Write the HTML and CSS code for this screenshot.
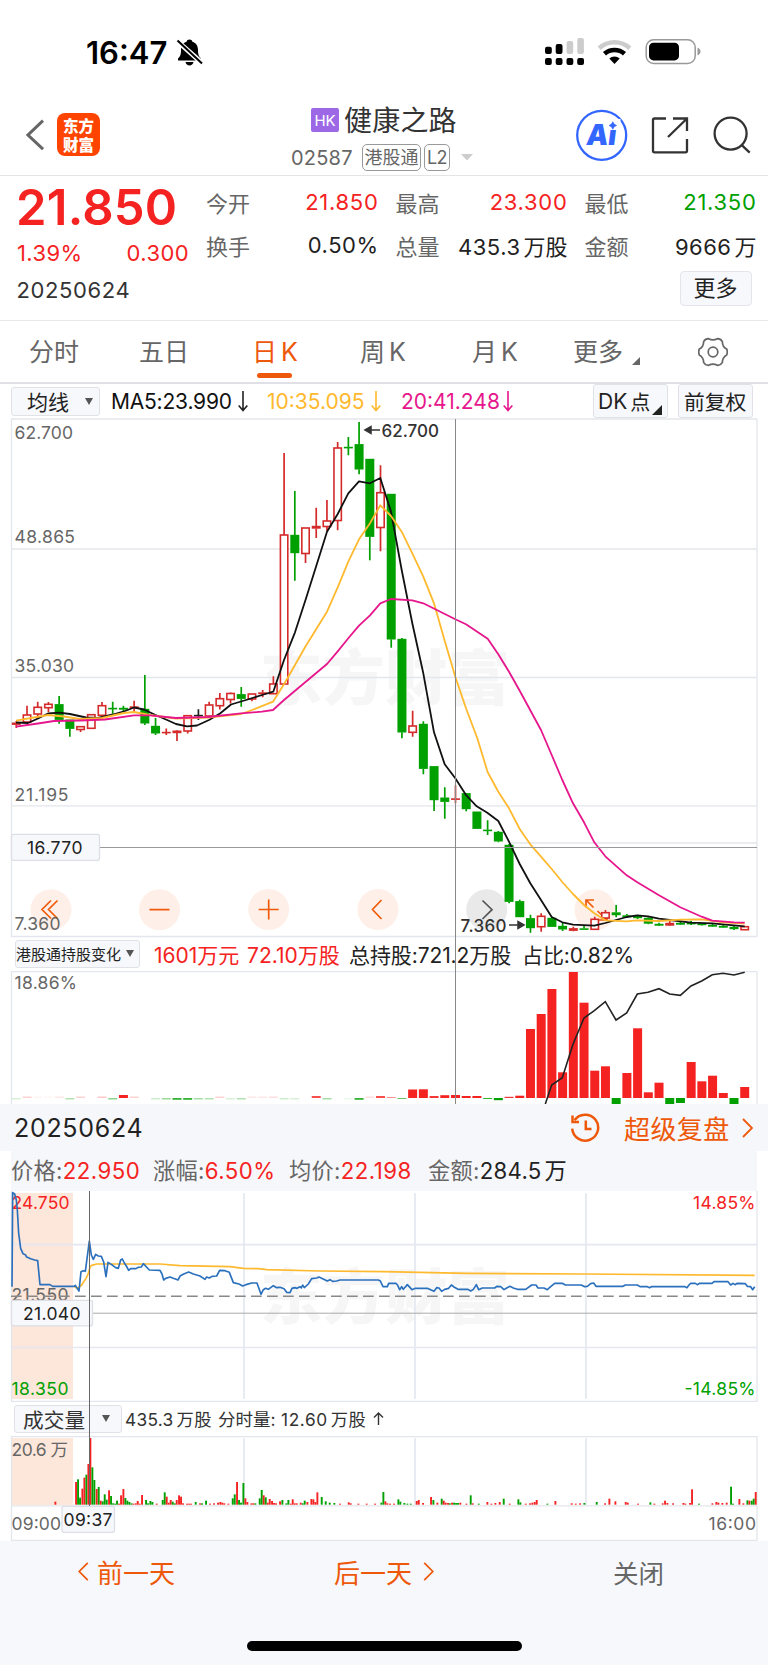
FILE: index.html
```html
<!DOCTYPE html>
<html lang="zh-CN">
<head>
<meta charset="utf-8">
<title>健康之路 02587</title>
<link rel="stylesheet" href="styles.css">
</head>
<body>
<header class="status">
  <span class="clock">16:47</span>
  <svg class="bell" width="27" height="30" viewBox="0 0 27 30"><path d="M13.5 1.5c1.6 0 2.6.8 2.9 2.2 3.800 1.200 5.600 4.300 5.600 8.300 0 5 1 6.500 3 8.500v2H2v-2c2-2 3-3.500 3-8.500 0-4 1.800-7.100 5.600-8.300.3-1.400 1.300-2.200 2.900-2.200zM9.500 24h8c-.4 2.300-2 3.500-4 3.500s-3.600-1.200-4-3.500z"/><path d="M0 2l26.500 23.500" stroke="#fff" stroke-width="5"/><path d="M1.500 2.500L26 25.500" stroke="#000" stroke-width="2"/></svg>
  <svg class="signals" width="160" height="30" viewBox="544 37 160 30">
    <g><rect x="545" y="46.700" width="6.800" height="7.400" rx="2"/><rect x="555.700" y="44" width="6.800" height="10" rx="2"/><rect x="566.600" y="41" width="6.600" height="13" rx="2" fill="#ccc"/><rect x="577.300" y="38" width="6.600" height="16" rx="2" fill="#ccc"/><rect x="545" y="58" width="6.800" height="7" rx="2"/><rect x="555.700" y="58" width="6.800" height="7" rx="2"/><rect x="566.500" y="58" width="6.800" height="7" rx="2"/><rect x="577.200" y="58" width="6.800" height="7" rx="2"/></g>
    <g fill="none" stroke-width="4.600"><path d="M599.200 48.200a22.500 22.500 0 0 1 30.600 0" stroke="#ccc"/><path d="M604.500 53.800a15 15 0 0 1 20 0" stroke="#000"/></g><path d="M609.300 58.600a7.600 7.600 0 0 1 10.400 0l-5.200 5.300z"/>
    <rect x="646.200" y="39.800" width="49" height="23.600" rx="7.500" fill="none" stroke="#999" stroke-width="1.500"/><rect x="649" y="42.800" width="30" height="17.600" rx="4.500"/><path d="M697.500 47.500c4 1.500 4 6.500 0 8z" fill="#999"/>
  </svg>
</header>

<nav class="nav">
  <svg class="back" width="18" height="32" viewBox="0 0 18 32"><path d="M17 1.700L2 16l15 14.200" fill="none" stroke="#666" stroke-width="3"/></svg>
  <div class="logo"><span>东方</span><span>财富</span></div>
  <div class="stock">
    <div class="stock-name"><i class="hk">HK</i><b>健康之路</b></div>
    <div class="stock-code"><span class="code">02587</span><span class="tag tag-cn">港股通</span><span class="tag">L2</span><svg width="12" height="7" viewBox="0 0 12 7"><path d="M0 0h12L6 6.500z" fill="#ccc"/></svg></div>
  </div>
  <svg class="nav-icons" width="180" height="56" viewBox="574 108 180 56">
    <circle cx="601.700" cy="135.300" r="24.500" fill="#fff" stroke="#36f" stroke-width="2.300"/>
    <text class="ai" transform="translate(585.500 145.300) skewX(-7)" x="0" y="0" textLength="30" lengthAdjust="spacingAndGlyphs">Ai</text><path d="M606.500 119h14v11h-14z" fill="#fff"/><path d="M612.800 121.800q.8 2.900 3.700 3.700-2.900.8-3.700 3.700-.8-2.900-3.700-3.700 2.900-.8 3.700-3.700z" fill="#36f" stroke="#36f" stroke-width=".7"/>
    <g fill="none" stroke="#333" stroke-width="2.300"><path d="M666 118.500h-11.500q-1.500 0-1.500 1.500v30.800q0 1.500 1.500 1.500h31q1.500 0 1.500-1.500V139"/><path d="M673 118.500h14V131M668 137l18.500-18"/><circle cx="730.600" cy="133.600" r="16"/><path d="M741.500 144.800l8.200 7.800"/></g>
  </svg>
</nav>

<section class="quote">
  <div class="price">
    <div class="last">21.850</div>
    <div class="change"><span>1.39%</span><span>0.300</span></div>
    <div class="date">20250624</div>
  </div>
  <dl class="stats">
    <dt>今开</dt><dd class="up">21.850</dd><dt>最高</dt><dd class="up">23.300</dd><dt>最低</dt><dd class="down">21.350</dd>
    <dt>换手</dt><dd>0.50%</dd><dt>总量</dt><dd>435.3<em>万股</em></dd><dt>金额</dt><dd>9666<em>万</em></dd>
    <dd class="more-cell"><button class="more">更多</button></dd>
  </dl>
</section>

<nav class="tabs">
  <a>分时</a><a>五日</a><a class="on">日<u>K</u></a><a>周<u>K</u></a><a>月<u>K</u></a>
  <a class="tab-more">更多<svg width="8" height="8" viewBox="0 0 8 8"><path d="M8 0v8H0z" fill="#666"/></svg></a>
  <svg class="gear" width="30" height="30" viewBox="-15 -15 30 30" fill="none" stroke="#666" stroke-width="1.700"><path d="M13.690 2.910Q9.350 5.400 9.370 10.400 7.400 13.500 4.330 13.310 0 10.800-4.330 13.310-7.400 13.500-9.370 10.400-9.350 5.400-13.690 2.910-14.900 0-13.690-2.910-9.350-5.400-9.370-10.400-7.400-13.500-4.330-13.310 0-10.800 4.330-13.310 7.400-13.500 9.370-10.400 9.350-5.400 13.690-2.910 14.900 0 13.690 2.910z"/><circle r="4.800"/></svg>
</nav>

<main class="kline">
  <div class="ma-row">
    <button class="pill ma-pill">均线<i class="caret"></i></button>
    <span class="ma ma5">MA5:23.990</span><svg class="arr" width="10" height="21" viewBox="0 0 10 21"><path d="M5 0v19.500M.7 14.500L5 19.500l4.300-5" stroke="#222"/></svg>
    <span class="ma ma10">10:35.095</span><svg class="arr" width="10" height="21" viewBox="0 0 10 21"><path d="M5 0v19.500M.7 14.500L5 19.500l4.300-5" stroke="#ffb92e"/></svg>
    <span class="ma ma20">20:41.248</span><svg class="arr" width="10" height="21" viewBox="0 0 10 21"><path d="M5 0v19.500M.7 14.500L5 19.500l4.300-5" stroke="#e6168c"/></svg>
    <button class="pill dk">DK<em>点</em><svg width="10" height="10" viewBox="0 0 10 10"><path d="M10 0v10H0z" fill="#222"/></svg></button>
    <button class="pill fq">前复权</button>
  </div>
  <svg id="candles" width="768" height="520" viewBox="0 418 768 520">
    <text class="wm" x="260" y="699.500" textLength="250" lengthAdjust="spacingAndGlyphs">东方财富</text>
    <g class="grid"><path d="M11.500 419v518M757 419v518M11 419h746M11 549h746M11 677.500h746M11 805.800h746M511 843h246M11 936.500h746"/></g>
    <g fill="#fef0e8"><circle cx="51" cy="909.700" r="20.500"/><circle cx="159.500" cy="909.700" r="20.500"/><circle cx="268.700" cy="909.500" r="20.500"/><circle cx="378" cy="909.500" r="20.500"/><circle cx="486.700" cy="909.700" r="20.500" fill="#e9e9e9"/><circle cx="595" cy="909.700" r="20.500"/></g>
    <g fill="none" stroke="#f05a0a" stroke-width="1.700"><path d="M51 900.500l-9 9 9 9M57.500 900.500l-9 9 9 9M149.500 909.700h20M258.700 909.500h20M268.700 899.500v20M381.500 900l-9 9.500 9 9.500M586 907.500v-7.500h8M586 900l7.500 7.500M597.500 911l9.500 9M607 912.500v7.500h-8"/><path d="M482.500 900.500l9.500 9.200-9.500 9.300" stroke="#555"/></g>
    <g class="axis"><text x="14.500" y="438.500" textLength="58.500">62.700</text><text x="14.500" y="542.500" textLength="60.500">48.865</text><text x="14.500" y="671.500" textLength="59.500">35.030</text><text x="14.500" y="800.500" textLength="54">21.195</text><text x="14.500" y="930" textLength="46">7.360</text></g>
    <g id="candle-layer"></g>
    <g fill="none" stroke-width="1.800" stroke-linejoin="round">
      <path stroke="#111" d="M16 722.500L28 723 38 718.500 48 713.500 59 712.700 70 714 86 717.500 98 718 113 714.500 125 711 134 707.500 144 709.500 155 714.700 166 719.500 176 724 187 726.300 197 725.500 209 720 220 713.500 231 704.500 246 700 262 695 273.300 691.700 284 660 295 632.300 305.500 600 316 566.700 327 531.700 337.700 514 348.300 493.300 359 481.300 370 483.300 380.300 478 391 511.700 401.700 570 412.300 623.300 423.300 673.300 434 732.300 444.700 764.300 455.300 778.300 466 795 476.700 806.300 487.300 812.700 498.300 821 509 841.700 519.700 864 530.300 883.300 541 900 551.700 917 562.300 922.300 573 924.700 594.300 925.700 605.300 923 616 920 626.700 917 637.300 915.300 648 916.300 659 918.700 669.700 920 691 922.700 712.300 923.300 723 924.300 744.700 926.300"/>
      <path stroke="#ffb92e" d="M16 720.700L48 715 64 716.500 80 719 102 718 124 713 134 712 150 715 176 718.500 208 717.500 241 714 252 710 273 701.700 284 684.300 295 665 305.300 646.700 327 611.700 337.700 587.300 348.300 561.700 359 539.300 370 523.300 380.300 505.300 391 516 401.700 531.700 412.300 553.300 423.300 576.700 434 603.300 444.700 640.700 455.300 676.700 466 708.300 477.300 738.300 487.700 772.300 498.300 791.700 509 808.300 519.700 829 530.300 844.300 541 856.700 551.700 869 562.300 882 573 894 584 905 594.300 913.300 605.300 920.300 626.700 921.300 637 920.300 659 921 680.300 919.700 701.700 919.300 723 922.300 744.700 923.500"/>
      <path stroke="#e6168c" d="M16 726.700L38 723.500 54 721 80 720.500 105 719.500 134 715.300 150 715.300 176 718 208 717 241 713.300 262 711.700 273 710 284 700 327 664 337.700 651.300 348.300 638.300 359 625.700 370 615.300 380.300 603.300 391 599 412.300 600.300 423.300 603.300 455.300 619.300 466 624.300 487.700 638.700 498.300 654.300 509 671.700 519.700 690.700 541 730 551.700 755 562.300 780 573 803.300 584 822.300 594.300 842.300 605.300 856.300 626.700 875.300 637.300 882.300 659 895.300 680.300 907.300 701.700 916.700 712.300 920.700 734 922.300 744.700 922.700"/>
    </g>
    <g class="mark"><text x="381.500" y="436.500" textLength="57.500">62.700</text><text x="460.500" y="931.500" textLength="46">7.360</text><path d="M368 430h12M509 925h12"/><path d="M365 430l6-3.500v7zM524 925l-6-3.500v7z" fill="#333" stroke="none"/></g>
    <path d="M11 847.500h746" stroke="#999"/>
    <g class="tip"><rect x="11.500" y="834.300" width="88" height="26" rx="2"/><text x="27" y="854" textLength="55.500">16.770</text></g>
  </svg>
  <div class="hold-row">
    <button class="pill hold-pill">港股通持股变化<i class="caret"></i></button>
    <span class="h1 up">1601万元</span><span class="h2 up">72.10万股</span><span class="h3">总持股:721.2万股</span><span class="h4">占比:0.82%</span>
  </div>
  <svg id="holding" width="768" height="133" viewBox="0 971 768 133">
    <path class="grid" d="M11.500 971.500v133M757 971.500v133M11 971.500h746"/>
    <g class="axis"><text x="14.500" y="989" textLength="62.500">18.86%</text></g>
    <g id="holding-layer"></g>
    <path fill="none" stroke="#222" stroke-width="1.600" d="M545.300 1104L551.700 1085 562.300 1077.700 573 1044.300 584 1018 594.300 1010.700 605.300 1001.700 616 1020 626.700 1013 637.300 994 648 992.300 659 988.700 669.700 994 680.300 995.300 691 986 701.700 981 712.300 974.700 723 973.300 734 975 744.700 972.300"/>
  </svg>
  <div class="crosshair cross-day"></div>
</main>

<section class="replay">
  <div class="replay-head">
    <span class="replay-date">20250624</span>
    <svg class="history" width="30" height="30" viewBox="570.500 1112 30 30" fill="none" stroke="#ee580a" stroke-width="2.500"><path d="M575 1119.200a13 13 0 1 1-2.300 8.500"/><path d="M573 1114.500v6.500h6.500M586.300 1119.500v8.500h5.700"/></svg>
    <span class="super">超级复盘</span>
    <svg class="chev" width="11" height="20" viewBox="0 0 11 20"><path d="M1 1l9 9-9 9"/></svg>
  </div>
  <div class="info"><span class="i1">价格:<b>22.950</b></span><span class="i2">涨幅:<b>6.50%</b></span><span class="i3">均价:<b>22.198</b></span><span class="i4">金额:<b class="dark">284.5<em>万</em></b></span></div>
  <svg width="768" height="211" viewBox="0 1191 768 211">
    <text class="wm" x="260" y="1318.500" textLength="250" lengthAdjust="spacingAndGlyphs">东方财富</text>
    <rect x="12" y="1193" width="61" height="206" fill="#fde6da"/>
    <path class="grid2" d="M12 1244.700h745M12 1347.500h745M244 1193v206M415 1193v206M586 1193v206"/>
    <path class="grid" d="M11.500 1191v210.500H757V1191"/>
    <path d="M11 1313.200h746" stroke="#aaa"/>
    <g class="axis"><text class="r" x="11.500" y="1208.500" textLength="58">24.750</text><text x="11.500" y="1301" textLength="57">21.550</text><text class="g" x="11.500" y="1394.500" textLength="57">18.350</text><text class="r" x="693" y="1208.500" textLength="62.500">14.85%</text><text class="g" x="684.500" y="1394.500" textLength="71">-14.85%</text></g>
    <path d="M11 1296.200h746" stroke="#888" stroke-width="1.500" stroke-dasharray="10.700 5.300"/>
    <g transform="translate(0 1180) scale(.33333)" fill="none" stroke-width="5" stroke-linejoin="round">
      <path stroke="#ffb92e" d="M222 319L232 326 245 315 258 295 265 280 270 262 275 256 290 252 480 252 540 257 690 260 730 265 775 266 800 269 960 273 1152 275 1402 280 1752 282 2264 286"/>
      <path stroke="#2b70bd" d="M36 320L38 38 44 42 49 60 52 90 56 160 62 205 69 221 76 224 80 231 92 236 104 240 113 242 120 314 150 314 158 319 222 319 226 316 237 333 243 275 250 272 256 274 268 183 274 225 280 238 287 223 295 228 304 229 311 246 318 290 324 247 335 254 347 263 355 265 362 240 367 237 373 249 379 258 386 271 392 266 408 266 414 262 424 261 430 251 448 270 480 271 486 282 491 300 497 295 510 291 520 295 534 300 541 287 553 281 566 276 580 282 600 288 615 298 620 291 628 294 636 289 650 288 659 271 675 272 688 277 700 308 717 312 728 318 738 314 755 309 771 309 783 343 790 329 797 325 805 328 820 317 830 323 840 322 852 326 860 337 870 338 876 325 884 323 891 325 900 320 904 324 908 315 913 323 925 312 935 296 950 294 957 291 968 296 982 303 990 299 998 304 1010 303 1020 300 1135 300 1141 303 1149 320 1162 320 1166 310 1188 310 1193 316 1199 329 1205 320 1210 328 1222 314 1236 329 1246 325 1282 325 1302 334 1310 323 1317 324 1325 334 1334 328 1346 325 1354 315 1362 321 1374 328 1404 328 1412 333 1420 328 1429 314 1436 329 1447 324 1484 324 1490 319 1502 320 1512 329 1520 324 1530 319 1540 324 1552 328 1577 328 1595 315 1608 315 1614 324 1632 324 1642 329 1652 320 1664 310 1687 310 1696 315 1744 315 1754 320 1762 319 1772 311 1781 309 1788 319 1869 319 1876 315 1912 315 1920 320 1942 320 1949 323 1954 320 2055 320 2061 323 2067 315 2072 310 2086 310 2092 314 2099 310 2136 310 2142 305 2184 305 2192 315 2199 310 2205 314 2212 310 2236 311 2242 319 2252 320 2258 329 2264 320"/>
    </g>
    <g class="tip"><rect x="11.500" y="1300.300" width="81" height="25.500" rx="2"/><text x="23" y="1319.700" textLength="57.500">21.040</text></g>
  </svg>
  <div class="vol-row"><button class="pill vol-pill">成交量<i class="caret"></i></button><span class="v1">435.3<em>万股</em></span><span class="v2">分时量:</span><span class="v3">12.60<em>万股</em></span><svg width="11" height="13" viewBox="0 0 11 13"><path d="M5.500 13V1M1 5.500L5.500 1 10 5.500" fill="none" stroke="#333" stroke-width="1.400"/></svg></div>
  <svg id="volume" width="768" height="105" viewBox="0 1436 768 105">
    <rect x="12" y="1438" width="61" height="67" fill="#fde6da"/>
    <path class="grid2" d="M244 1438v67M415 1438v67M586 1438v67"/>
    <path class="grid" d="M11.500 1436v105M757 1436v105M11 1436.500h746M11 1505.800h746M11 1540.500h746"/>
    <g class="axis"><text x="11.500" y="1455.500" textLength="56.500">20.6 万</text><text x="11.500" y="1529.500" textLength="49.500">09:00</text><text x="708.500" y="1529.500" textLength="47.500">16:00</text></g>
    <g id="volume-layer"></g>
    <g class="tip"><rect x="62" y="1506.300" width="52.500" height="26" rx="2"/><text x="63.500" y="1525.500" textLength="49">09:37</text></g>
  </svg>
  <div class="crosshair cross-minute"></div>
</section>

<footer class="footer">
  <div class="foot-row">
    <a class="prev"><svg class="chev" width="11" height="19" viewBox="0 0 11 20"><path d="M10 1l-9 9 9 9"/></svg>前一天</a>
    <a class="next">后一天<svg class="chev" width="11" height="19" viewBox="0 0 11 20"><path d="M1 1l9 9-9 9"/></svg></a>
    <a class="close">关闭</a>
  </div>
  <div class="home"></div>
</footer>
<script src="charts.js"></script>
</body>
</html>
```

FILE: styles.css
```css
* { box-sizing: border-box; }
body { margin: 0; width: 768px; background: #fff; color: #222; font-family: Inter, "Noto Sans CJK SC", sans-serif; font-weight: 400; white-space: nowrap; }
svg { display: block; flex: none; }
b, i, em, u { font-style: normal; font-weight: inherit; text-decoration: none; }
button { font: inherit; color: inherit; padding: 0; margin: 0; white-space: nowrap; }
.up { color: #f52222; }
.down { color: #00a000; }

.status { height: 90px; display: flex; align-items: flex-start; padding-left: 86px; }
.clock { width: 90px; padding-top: 34px; font-size: 31px; line-height: 38px; font-weight: 600; color: #000; }
.bell { margin-top: 38px; }
.signals { margin: 37px 0 0 341px; }

.nav { height: 86px; display: flex; border-bottom: 1px solid #e4e4e4; padding-left: 26px; }
.back { margin-top: 29px; }
.logo { width: 43px; height: 43px; margin: 23px 0 0 13px; border-radius: 8px; background: #ff4400; color: #fff; font: 900 15.500px/19px "Noto Sans CJK SC"; display: flex; flex-direction: column; align-items: center; padding-top: 3px; }
.stock { width: 192px; margin-left: 189px; }
.stock-name { display: flex; align-items: center; height: 34px; margin-top: 12px; padding-left: 22px; font-size: 28px; color: #333; letter-spacing: 0.200px; }
.hk { width: 28px; height: 24px; margin: 2px 5px 0 0; background: #9c68e6; border-radius: 2px; color: #fff; font-size: 15px; line-height: 25px; text-align: center; letter-spacing: 0; }
.stock-code { display: flex; align-items: center; height: 27px; margin-top: 8px; font-size: 20px; color: #666; }
.code { width: 73px; padding-left: 2px; letter-spacing: 0.200px; }
.tag { width: 26px; height: 27px; line-height: 25px; margin-right: 3px; border: 1.500px solid #999; border-radius: 5px; font-size: 18px; text-align: center; letter-spacing: -0.500px; }
.tag-cn { width: 59px; letter-spacing: 0; }
.stock-code svg { margin-left: 8px; }
.nav-icons { margin: 18px 0 0 93px; }
.ai { font: 900 29px Inter; fill: #36f; }

.quote { height: 145px; display: flex; border-bottom: 1px solid #e8e8e8; }
.price { width: 206px; padding-left: 16px; }
.last { font-size: 49px; font-weight: 600; line-height: 60px; height: 60px; color: #f52222; padding-top: 2px; letter-spacing: 0.200px; }
.change { display: flex; justify-content: space-between; width: 173px; padding-left: 1px; font-size: 22px; line-height: 30px; padding-top: 2px; color: #f52222; letter-spacing: 0.400px; }
.date { margin-top: 7px; font-size: 22px; line-height: 30px; color: #333; letter-spacing: 0.600px; padding-left: 0.500px; }
.stats { margin: 4px 0 0; display: grid; grid-template-columns: 44px 128.500px 61px 128px 61px 128px; grid-template-rows: 43px 43px 44px; align-items: center; font-size: 22px; color: #222; }
.stats dt { color: #666; }
.stats dt:nth-of-type(3n+2), .stats dt:nth-of-type(3n+3) { padding-left: 17px; }
.stats dd { margin: 0; text-align: right; letter-spacing: 0.500px; }
.stats dd.up { color: #f52222; letter-spacing: 0.700px; }
.stats dd.down { color: #00a000; letter-spacing: 0.700px; }
.stats em { margin-left: 3px; letter-spacing: 0; }
.stats .more-cell { grid-column: 1 / -1; display: flex; justify-content: flex-end; letter-spacing: 0; }
.more { width: 72px; height: 35px; margin: 1px 5px 0 0; line-height: 31px; border: 1.500px solid #e3e5ea; border-radius: 4px; background: #f6f8fb; font-size: 22px; }

.tabs { height: 63px; border-bottom: 2px solid #dfe1e7; display: flex; align-items: flex-start; padding-left: 29px; color: #666; font-size: 25px; line-height: 62px; }
.tabs a { width: 110px; }
.tabs a:nth-child(2) { width: 113px; }
.tabs u { margin-left: 4px; }
.tabs a:nth-child(3) { width: 108px; }
.tabs a:nth-child(4) { width: 112px; }
.tabs a:nth-child(5) { width: 101px; }
.tabs .on { color: #ee580a; position: relative; }
.on::after { content: ""; position: absolute; left: 4.500px; top: 52px; width: 35.500px; height: 5px; border-radius: 2.500px; background: #ee580a; }
.tabs .tab-more { width: 125px; display: flex; }
.tab-more svg { margin: 36px 0 0 9px; }
.gear { margin-top: 16px; }

.kline, .replay { position: relative; }
.pill { border: 1px solid #e0e2e7; border-radius: 3px; background: #f6f8fb; display: flex; align-items: center; flex: none; }
.caret { border: 4.500px solid transparent; border-top: 7px solid #555; border-bottom: 0; }
.ma-row { height: 34px; display: flex; align-items: center; padding-left: 11px; font-size: 21px; }
.ma-pill { width: 89px; height: 29px; padding-left: 15px; gap: 16px; font-size: 21px; }
.ma { padding-left: 11px; width: 138px; letter-spacing: -0.200px; color: #111; }
.ma10 { color: #ffb92e; width: 123px; padding-left: 19px; }
.ma20 { color: #e6168c; width: 122px; padding-left: 20px; }
.arr { fill: none; stroke-width: 1.600px; }
.arr + .ma { letter-spacing: 0; }
.dk { width: 75px; height: 34px; margin-left: 80px; padding-left: 4px; font-size: 21px; }
.dk em { margin-left: 3px; font-size: 20px; }
.dk svg { margin: 17px 0 0 2px; }
.fq { width: 75px; height: 34px; margin-left: 10px; padding-left: 5px; font-size: 20.800px; }

.grid { fill: none; stroke: #e3e6ec; stroke-width: 1.300px; }
.grid2 { fill: none; stroke: #e6e8f1; stroke-width: 1.700px; }
.wm { font: 900 60px "Noto Sans CJK SC"; fill: #f6f6f6; }
.axis { font-size: 17.500px; fill: #666; }
.axis .r { fill: #f52222; }
.axis .g { fill: #00a000; }
.mark { font-size: 17px; font-weight: 500; fill: #333; stroke-width: 1.500px; }
.mark path { stroke: #333; }
.mark text { stroke: none; }
.tip rect { fill: #f6f8fb; stroke: #dcdfe6; stroke-width: 1.300px; }
.tip text { font-size: 17.500px; fill: #222; }
.crosshair { position: absolute; width: 1px; background: #888; }
.cross-day { left: 455px; top: 35px; bottom: 0; }
.cross-minute { left: 88.500px; top: 87px; height: 315px; background: #666; }

.hold-row { height: 33px; display: flex; align-items: center; padding: 0 0 2px 15px; font-size: 21px; }
.hold-pill { width: 125px; height: 28px; font-size: 15px; padding-left: 0; gap: 5px; }
.h1 { width: 93px; margin-left: 14px; }
.h2 { width: 102px; }
.h3 { width: 173px; letter-spacing: -0.100px; }
.h4 { letter-spacing: -0.100px; }
#holding { overflow: hidden; }

.replay-head { height: 47px; background: #f6f7fa; display: flex; align-items: center; padding-left: 14px; }
.replay-date { width: 556px; font-size: 25px; letter-spacing: 0.700px; }
.super { width: 118px; margin-left: 24px; font-size: 26px; letter-spacing: 0.400px; color: #ee580a; }
.chev { fill: none; stroke: #ee580a; stroke-width: 1.800px; }
.info { height: 40px; margin: 0 11px; background: #f6f7fa; color: #666; font-size: 22.200px; line-height: 40px; display: flex; letter-spacing: 0.300px; }
.info b { color: #f52222; letter-spacing: 0.500px; }
.info .dark { color: #222; letter-spacing: 0.300px; }
.info em, .vol-row em { margin-left: 3px; }
.i1 { width: 142px; }
.i2 { width: 136px; }
.i3 { width: 139px; }
.vol-row { height: 34px; display: flex; align-items: center; padding: 0 0 1px 14px; font-size: 17.300px; color: #333; }
.vol-pill { width: 108px; height: 28px; padding-left: 8px; gap: 17px; font-size: 20.700px; }
.v1 { margin-left: 3px; width: 93px; letter-spacing: 0.300px; }
.v2 { width: 63px; font-size: 17.500px; }
.v3 { width: 92px; letter-spacing: 0.600px; }

.footer { height: 125px; background: #f6f8fb; padding-top: 10px; }
.foot-row { display: flex; height: 40px; align-items: center; font-size: 26px; color: #ee580a; padding-left: 78px; }
.foot-row a { display: flex; align-items: center; }
.prev { width: 256px; gap: 8px; }
.next { width: 279px; gap: 11px; }
.close { color: #666; font-size: 25.500px; }
.home { width: 275px; height: 10px; margin: 50px auto 0; border-radius: 5px; background: #000; }
```

FILE: charts.js
```js
const NS = "http://www.w3.org/2000/svg";
const COLORS = { r: "#d42a2a", g: "#00a000", k: "#222" };

function add(parent, name, attrs) {
  const el = document.createElementNS(NS, name);
  for (const key in attrs) el.setAttribute(key, attrs[key]);
  parent.appendChild(el);
}
const centre = i => 16.3 + i * 10.712;

// colour, high, body top, body bottom, low
const candles = [
  ["r",721,722.7,724.7,728],["r",705.7,715,722,722],["r",701.7,707.3,714,719],["r",702,704.3,707.7,712],["g",696,704.3,719.7,723.7],
  ["g",719.7,719.7,728.7,736.7],["r",726.7,726.7,729.5,732],["r",714.7,714.7,728.3,729],["r",702,705.7,715.3,715.3],["g",701.7,708,709,713.7],
  ["g",705.7,708,709.5,711],["r",700.7,706.5,708,711.7],["g",675,709,723.3,725],["g",718,726,733.3,735],["r",728.5,732,733,735],
  ["r",730,730.7,733,741],["r",715,715.7,731,733.5],["k",709.3,715,716,720],["r",701.7,705,716,716],["r",693,698.7,705.7,709.5],
  ["r",692.5,693.5,699.5,703.5],["g",687,694.3,698.7,706.7],["r",694,694,699,701.3],["r",690,692.5,694,697.3],["r",676.3,684,693.7,694],
  ["r",453,535,684,685],["g",491,535,553,580.7],["r",528,528,553.5,563],["r",507.7,526,528.5,538],["r",500,521,526.5,531],
  ["r",442,448,520.5,530.3],["g",437,447,448,455.3],["g",422,444.3,469.3,474.3],["g",459,459,536.7,560.3],["r",465.3,492.7,527.5,551.3],
  ["g",494,494,639.3,647.7],["g",638,639,732.3,738.3],["r",710.7,726,732.3,736.7],["g",721.3,724,768.7,774.3],["g",766.3,766.3,800,811],
  ["g",787.3,797.7,801.7,818.7],["r",785.3,798.5,799.5,803.3],["g",793.3,793.3,809,811.3],["g",811.7,811.7,828.7,828.7],["g",820.3,829.8,831,835],
  ["g",831,832,841.3,842.3],["g",844,845,901.7,903.3],["g",899.7,901.3,917,917],["g",914.7,918.3,928,932.7],["r",913.3,916.3,926.7,931.7],
  ["g",917,918,926.7,926.7],["g",922,926,929.3,931],["r",926.7,928.3,930.7,931.3],["g",925,928.5,929.5,929.5],["r",916.7,919.3,929.3,929.3],
  ["r",910,912.7,918,919],["g",905,912.5,915,917.3],["g",914,915.5,917,917.3],["g",915,915.7,918,919],["g",917.3,918,923.5,924.3],
  ["g",922.7,924,925.5,926],["r",921,923,925.5,926],["g",921.7,923,924.5,925],["g",920.7,923,924,925],["g",923,923.5,925,925.5],
  ["g",924,925,926.5,927],["g",925,926,927.5,928],["g",926,927,929,930],["r",926,926.7,929.7,930]
];
const candleLayer = document.getElementById("candle-layer");
candles.forEach(([c, high, top, bottom, low], i) => {
  const x = centre(i), color = COLORS[c], thin = bottom - top < 2.6;
  add(candleLayer, "path", { d: `M${x} ${high}V${top}M${x} ${bottom}V${low}`, stroke: color, "stroke-width": 1.7 });
  if (c === "r" && !thin) {
    add(candleLayer, "rect", { x: x - 3.7, y: top, width: 7.4, height: bottom - top, fill: "#fff", stroke: color, "stroke-width": 1.6 });
  } else {
    add(candleLayer, "rect", { x: x - 4.5, y: top - 0.2, width: 9, height: Math.max(1.6, bottom - top + 0.4), fill: color });
  }
});

// index, colour, height, opacity; bars rise from or hang below the base line
const BASE = 1098;
const holding = [
  [0,"g",1.5,.15],[1,"r",1.5,.2],[2,"r",1.5,.05],[3,"r",1.5,.04],[4,"r",1.5,.1],[5,"g",1.5,.3],[6,"r",1.5,.2],[8,"r",1.5,.25],[9,"g",1.5,.45],[10,"r",3,1],
  [11,"r",1.5,.2],[13,"g",1.5,.2],[14,"g",1.5,.4],[15,"g",1.8,.8],[16,"g",1.8,.8],[17,"g",1.5,.35],[18,"g",1.5,.3],[19,"r",1.5,.2],[20,"g",1.5,.15],[21,"g",1.5,.3],
  [22,"r",1.5,.1],[23,"r",1.5,.1],[24,"r",1.5,.15],[25,"g",1.5,.2],[26,"g",1.5,.15],[28,"r",2,.8],[29,"g",1.5,.35],[31,"g",1.5,.08],[32,"g",1.8,.8],[33,"r",1.5,.15],
  [34,"r",2,.8],[35,"r",1,.5],[36,"g",1,.6],[37,"r",8.5,1],[38,"r",8.7,1],[39,"r",2,.9],[40,"r",2.8,1],[41,"r",3,1],[42,"r",2,1],[43,"r",2,1],[44,"g",1,.8],[45,"g",2.2,1],
  [46,"r",1.2,.9],[47,"r",2.3,1],[48,"r",69,1],[49,"r",84,1],[50,"r",109,1],[51,"r",25.7,1],[52,"r",126,1],[53,"r",95.3,1],[54,"r",27.3,1],[55,"r",31.7,1],[56,"g",6,1],
  [57,"r",25,1],[58,"r",69.7,1],[59,"r",5.7,1],[60,"r",15.3,1],[61,"g",6,1],[62,"g",5,1],[63,"r",36,1],[64,"r",16.7,1],[65,"r",22.3,1],[66,"r",5,1],[67,"g",6,1],[68,"r",11,1]
];
const holdingLayer = document.getElementById("holding-layer");
holding.forEach(([i, c, h, opacity]) => add(holdingLayer, "rect", {
  x: centre(i) - 4.5, y: c === "r" ? BASE - h : BASE, width: 9, height: h, opacity,
  fill: c === "r" ? "#f52222" : "#00a000"
}));

// minute volume: colour, x, top (thirds of a pixel from the panel origin)
const volume = "r166,965 r228,906 g234,898 g240,953 r247,926 r253,893 g259,884 r265,852 r271,774 g277,862 g283,900 r290,927 g296,921 r302,962 g308,964 g314,943 g320,959 r327,931 g333,948 g339,970 g345,971 g351,962 r357,971 r363,946 r370,927 g376,954 g382,962 g388,966 g394,970 r400,971 r407,970 r413,963 r419,971 r426,945 g438,960 g444,970 g451,963 g457,966 r470,971 g488,960 g494,937 r500,950 r506,968 r512,960 g518,965 g524,970 r530,960 r537,946 r543,950 r549,970 r561,971 r567,971 r573,971 g587,966 r600,970 g606,970 g618,962 r630,971 r642,970 r654,968 r661,966 r667,968 r673,970 r685,971 g698,955 g704,943 r711,906 g717,960 g723,968 g730,909 r736,955 r742,966 r754,970 r760,970 g766,970 g779,955 g785,930 r791,946 g797,952 r803,968 r809,957 r816,963 r822,969 r828,970 r840,964 g847,960 g859,970 g865,960 r872,971 r878,958 r884,970 r890,970 r902,968 g908,970 g914,962 r922,966 r934,957 r940,958 r946,966 r952,937 g965,951 g977,964 g989,968 g1003,969 r1020,971 r1046,967 r1052,970 r1075,971 r1100,971 r1125,971 g1144,968 g1150,936 r1156,964 r1162,970 r1170,971 r1182,971 g1195,958 g1201,965 g1213,969 g1222,971 g1232,971 r1250,963 r1256,960 r1269,969 r1293,951 g1300,960 r1312,968 g1325,956 r1331,962 r1337,968 r1344,969 g1349,970 r1356,968 g1362,968 g1368,969 g1374,969 r1381,968 r1399,971 g1412,946 r1418,970 g1436,971 r1462,966 r1474,971 r1486,969 r1499,966 g1511,956 r1529,971 g1555,958 g1561,967 r1577,971 r1590,970 r1597,968 r1604,966 r1610,960 g1642,971 r1666,963 r1715,970 r1727,971 r1740,970 g1753,969 g1790,966 r1815,970 r1828,956 r1846,964 r1877,966 r1883,968 r1914,971 g1951,967 r1963,971 r1988,970 r1995,962 r2002,969 r2019,970 r2050,969 r2056,971 r2070,969 r2076,928 g2097,971 r2137,970 r2149,966 r2155,968 r2167,969 r2180,968 g2193,920 g2199,971 r2218,957 r2230,970 g2242,961 r2248,962 g2255,962 g2261,956 r2267,936";
const volumeLayer = document.getElementById("volume-layer");
volume.split(" ").forEach(item => {
  const [x, top] = item.slice(1).split(",").map(Number);
  add(volumeLayer, "rect", {
    x: x / 3 - 0.9, y: 1180 + top / 3, width: 1.9, height: (974 - top) / 3,
    fill: item[0] === "r" ? "#f52222" : "#00a000"
  });
});
```
